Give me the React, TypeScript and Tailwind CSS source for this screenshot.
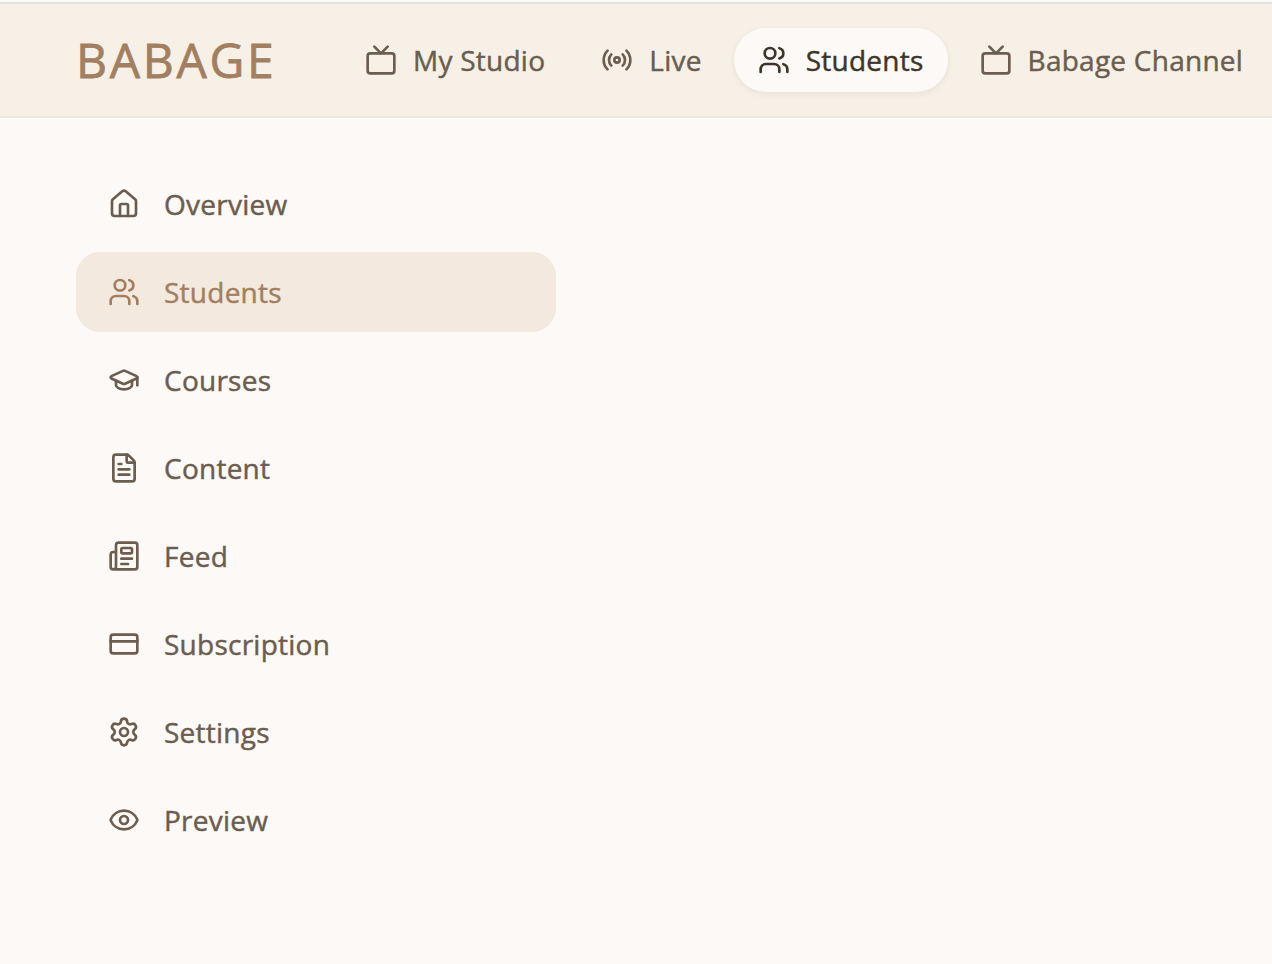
import {
  CreditCard,
  Eye,
  FileText,
  GraduationCap,
  House,
  Newspaper,
  Radio,
  Settings,
  Tv,
  Users,
  type LucideIcon,
} from "lucide-react";

type NavItem = {
  label: string;
  icon: LucideIcon;
};

const topNavItems: NavItem[] = [
  { label: "My Studio", icon: Tv },
  { label: "Live", icon: Radio },
  { label: "Students", icon: Users },
  { label: "Babage Channel", icon: Tv },
];

const sideNavItems: NavItem[] = [
  { label: "Overview", icon: House },
  { label: "Students", icon: Users },
  { label: "Courses", icon: GraduationCap },
  { label: "Content", icon: FileText },
  { label: "Feed", icon: Newspaper },
  { label: "Subscription", icon: CreditCard },
  { label: "Settings", icon: Settings },
  { label: "Preview", icon: Eye },
];

function Header({ active }: { active: string }) {
  return (
    <header className="flex h-[116px] items-center border-y-2 border-t-[#e2e2e2] border-b-[#efe7da] bg-[#f7f0e6] pl-[76px]">
      <span className="w-[265px] shrink-0 text-[48px] leading-[64px] tracking-[2.7px] text-[#a37f62] [-webkit-text-stroke:0.8px_currentColor]">
        BABAGE
      </span>
      <nav className="flex shrink-0 gap-2">
        {topNavItems.map(({ label, icon: Icon }) => (
          <a
            key={label}
            className={`flex h-16 items-center gap-4 rounded-full px-6 whitespace-nowrap ${
              label === active
                ? "bg-[#fdf9f6] text-[#3d3629] shadow-[0_2px_6px_rgba(61,54,41,0.08)]"
                : "text-[#6b5d4f]"
            }`}
          >
            <Icon className="size-8 shrink-0" />
            <span>{label}</span>
          </a>
        ))}
      </nav>
    </header>
  );
}

function Sidebar({ active }: { active: string }) {
  return (
    <aside className="ml-[76px] w-[480px] pt-[46px]">
      <ul className="space-y-2">
        {sideNavItems.map(({ label, icon: Icon }) => (
          <li key={label}>
            <a
              className={`flex h-20 items-center gap-6 rounded-3xl px-8 ${
                label === active
                  ? "bg-[#f3e9df] text-[#a37f62]"
                  : "text-[#6b5d4f]"
              }`}
            >
              <Icon className="size-8 shrink-0" />
              <span>{label}</span>
            </a>
          </li>
        ))}
      </ul>
    </aside>
  );
}

export default function App() {
  return (
    <div className="h-screen overflow-hidden bg-[#fdf9f6] pt-0.5 font-['Open_Sans',sans-serif] text-[28px] leading-10 font-medium tracking-[0.25px] [-webkit-text-stroke:0.45px_currentColor]">
      <Header active="Students" />
      <Sidebar active="Students" />
    </div>
  );
}
